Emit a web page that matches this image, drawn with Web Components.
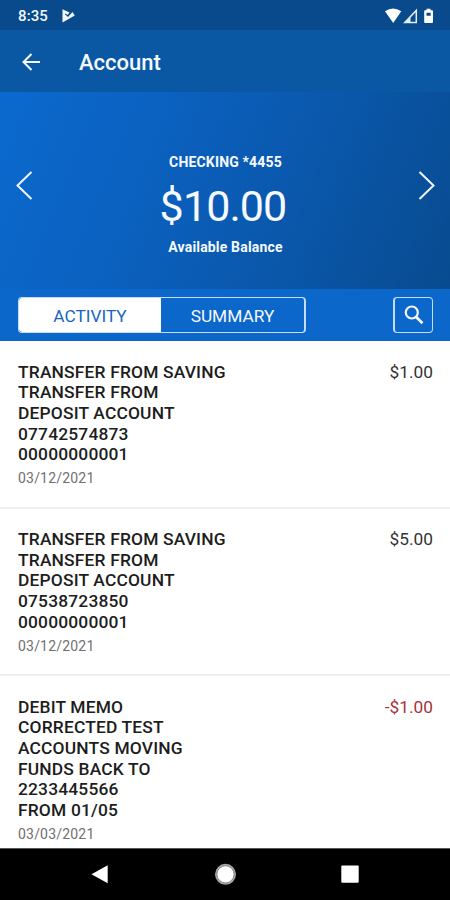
<!DOCTYPE html>
<html lang="en">
<head>
<meta charset="utf-8">
<title>Account</title>
<style>
html, body { margin: 0; height: 100%; }
body { font-family: Roboto, "Liberation Sans", sans-serif; background: #fff; overflow: hidden; }
</style>
</head>
<body>
<account-screen></account-screen>
<script>
const define = (name, html) => customElements.define(name, class extends HTMLElement {
  constructor() {
    super();
    const t = document.createElement('template');
    t.innerHTML = html;
    this.attachShadow({ mode: 'open' }).append(t.content.cloneNode(true));
  }
});

define('status-bar', `
<style>
:host { display: flex; height: 30px; box-sizing: border-box; padding: 2px 16px 0 18px; align-items: center; background: #084a8b; color: #f2f8ff; }
.time { font-size: 15px; font-weight: 500; letter-spacing: .1px; line-height: 28px; width: 44px; }
.grow { flex: 1; }
svg { display: block; }
</style>
<span class="time">8:35</span>
<svg width="13" height="14" viewBox="0 0 13 14"><path d="M.5.3 7.500 3.500 5.700 6 3.500 4.500 2.800 5.300 6 8 10.500 3 12.800 6.500.5 13.500Z" fill="#f2f8ff"/></svg>
<span class="grow"></span>
<svg width="50" height="16" viewBox="384 8 50 16" fill="#fff"><path d="M385 11.3Q393 5.8 401.3 11.3L393.2 23Z"/><path d="M416.3 10.5V22.6H404.8Z" fill="none" stroke="#e4eefa" stroke-width="1.5"/><path d="M410.5 17V22.5H405Z" fill="#e4eefa"/><path fill-rule="evenodd" d="M426.5 8.8H430.5V10.2H432Q433 10.2 433 11.2V22Q433 23 432 23H425Q424.200 23 424.200 22V11.200Q424.200 10.200 425 10.200H426.500ZM426.500 12.800V15.800H430.700V12.800Z"/></svg>
`);

define('app-bar', `
<style>
:host { display: flex; height: 62px; align-items: center; padding-left: 22px; background: #0a57a4; color: #f4f9ff; }
svg { display: block; margin: 1px 38px 0 0; }
span { font-size: 22px; font-weight: 500; line-height: 62px; padding-top: 3px; }
</style>
<svg width="19" height="18" viewBox="0 0 19 18" fill="none" stroke="#f4f9ff" stroke-width="2"><path d="M18 9H2M9.500 1 1.500 9 9.500 17"/></svg>
<span><slot></slot></span>
`);

define('balance-card', `
<style>
:host { display: flex; height: 197px; box-sizing: border-box; justify-content: space-between; padding: 0 15px 0 16px; color: #f6faff;
  background: linear-gradient(112deg, #0b69ce 0%, #0b62c1 30%, #0a58ad 62%, #084b90 100%); }
svg { display: block; margin-top: 79px; }
.mid { display: flex; flex-direction: column; align-items: center; white-space: nowrap; padding-top: 60px; }
.name { font-size: 14px; font-weight: 700; line-height: 20px; letter-spacing: .17px; }
.amount { font-size: 43px; font-weight: 400; line-height: 50px; margin: 9px 5px 0 0; letter-spacing: -.9px; }
.label { font-size: 14px; font-weight: 700; line-height: 20px; margin-top: 6px; letter-spacing: .17px; }
</style>
<svg width="17" height="29" viewBox="0 0 17 29" fill="none" stroke="#f0f6ff" stroke-width="2"><path d="M15.500 1 1.500 14.500 15.500 28"/></svg>
<div class="mid">
  <div class="name"><slot name="name"></slot></div>
  <div class="amount"><slot name="amount"></slot></div>
  <div class="label"><slot name="label"></slot></div>
</div>
<svg width="17" height="29" viewBox="0 0 17 29" fill="none" stroke="#f0f6ff" stroke-width="2"><path d="M1.500 1 15.500 14.500 1.500 28"/></svg>
`);

define('tab-strip', `
<style>
:host { display: flex; height: 52px; box-sizing: border-box; justify-content: space-between; padding: 8px 17px 0 18px; background: #0c67ca; color: #f4f9ff; }
.tabs { display: flex; width: 288px; height: 36px; box-sizing: border-box; border: 1px solid #c4dcf7; border-right-width: 2px; border-radius: 4px; overflow: hidden; font-size: 17.300px; line-height: 36px; text-align: center; }
.on { width: 142px; background: #fff; color: #1766c3; border-radius: 3px 0 0 3px; }
.off { flex: 1; }
.find { width: 40px; height: 36px; box-sizing: border-box; border: 1px solid #c4dcf7; border-width: 1px 1px 1px 2px; border-radius: 4px; display: flex; align-items: center; justify-content: center; }
svg { display: block; }
</style>
<div class="tabs"><div class="on"><slot name="on"></slot></div><div class="off"><slot name="off"></slot></div></div>
<div class="find"><svg width="20" height="20" viewBox="0 0 20 20" fill="none" stroke="#f4f9ff"><circle cx="7.800" cy="7.500" r="6" stroke-width="2.200"/><path d="M12.200 12 18.500 18.300" stroke-width="2.700"/></svg></div>
`);

define('activity-item', `
<style>
:host { display: flex; justify-content: space-between; height: 167.500px; box-sizing: border-box; padding: 20.500px 17px 0 18px; color: #1d1d1d; white-space: nowrap; border-bottom: 2px solid #efefef; }
:host([last]) { border: 0; height: auto; }
.title { font-size: 17.400px; font-weight: 500; line-height: 20.700px; letter-spacing: .17px; }
.date { font-size: 14px; line-height: 18px; margin-top: 4.300px; color: #707070; letter-spacing: .2px; }
.amount { font-size: 17.300px; line-height: 21px; color: #333; }
:host([negative]) .amount { color: #a8323a; }
</style>
<div><div class="title"><slot></slot></div><div class="date"><slot name="date"></slot></div></div>
<div class="amount"><slot name="amount"></slot></div>
`);

define('nav-bar', `
<style>
:host { display: flex; height: 52px; box-sizing: border-box; justify-content: center; background: #000; border-top: 1px solid #555; }
svg { display: block; }
</style>
<svg width="450" height="51" viewBox="0 849 450 51" fill="#fff"><path d="M91.500 874.200 107.700 865.200V883.200Z"/><circle cx="225.500" cy="874.300" r="10.500" fill="#aaa"/><circle cx="225.500" cy="874.300" r="8.600" fill="#fff" stroke="#6e6e6e" stroke-width=".8"/><rect x="341.300" y="865.500" width="17.400" height="17.300" rx="1"/></svg>
`);

define('account-screen', `
<style>
:host { display: flex; flex-direction: column; width: 450px; height: 900px; overflow: hidden; background: #fff; }
.list { flex: 1; min-height: 0; overflow: hidden; }
status-bar, app-bar, balance-card, tab-strip, nav-bar { flex-shrink: 0; }
</style>
<status-bar></status-bar>
<app-bar>Account</app-bar>
<balance-card><span slot="name">CHECKING *4455</span><span slot="amount">$10.00</span><span slot="label">Available Balance</span></balance-card>
<tab-strip><span slot="on">ACTIVITY</span><span slot="off">SUMMARY</span></tab-strip>
<div class="list">
<activity-item>TRANSFER FROM SAVING<br>TRANSFER FROM<br>DEPOSIT ACCOUNT<br>07742574873<br>00000000001<span slot="date">03/12/2021</span><span slot="amount">$1.00</span></activity-item>
<activity-item>TRANSFER FROM SAVING<br>TRANSFER FROM<br>DEPOSIT ACCOUNT<br>07538723850<br>00000000001<span slot="date">03/12/2021</span><span slot="amount">$5.00</span></activity-item>
<activity-item last negative>DEBIT MEMO<br>CORRECTED TEST<br>ACCOUNTS MOVING<br>FUNDS BACK TO<br>2233445566<br>FROM 01/05<span slot="date">03/03/2021</span><span slot="amount">-$1.00</span></activity-item>
</div>
<nav-bar></nav-bar>
`);
</script>
</body>
</html>
